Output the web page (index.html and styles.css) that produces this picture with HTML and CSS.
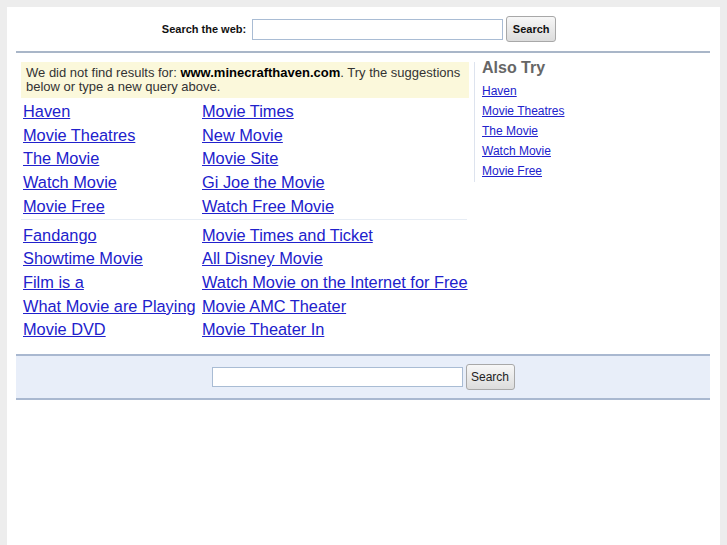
FILE: index.html
```html
<!DOCTYPE html>
<html>
<head>
<meta charset="utf-8">
<link rel="stylesheet" href="styles.css">
</head>
<body>
<div class="page">
  <div class="header">
    <label class="search-label">Search the web:</label>
    <input class="search-input" type="text">
    <button class="btn btn-bold">Search</button>
  </div>
  <div class="main">
    <div class="left">
      <div class="notice">We did not find results for: <b>www.minecrafthaven.com</b>. Try the suggestions below or type a new query above.</div>
      <div class="links">
        <a href="#">Haven</a><a href="#">Movie Times</a>
        <a href="#">Movie Theatres</a><a href="#">New Movie</a>
        <a href="#">The Movie</a><a href="#">Movie Site</a>
        <a href="#">Watch Movie</a><a href="#">Gi Joe the Movie</a>
        <a href="#">Movie Free</a><a href="#">Watch Free Movie</a>
      </div>
      <div class="sep"></div>
      <div class="links">
        <a href="#">Fandango</a><a href="#">Movie Times and Ticket</a>
        <a href="#">Showtime Movie</a><a href="#">All Disney Movie</a>
        <a href="#">Film is a</a><a href="#">Watch Movie on the Internet for Free</a>
        <a href="#">What Movie are Playing</a><a href="#">Movie AMC Theater</a>
        <a href="#">Movie DVD</a><a href="#">Movie Theater In</a>
      </div>
    </div>
    <div class="right">
      <div class="also">Also Try</div>
      <a href="#">Haven</a>
      <a href="#">Movie Theatres</a>
      <a href="#">The Movie</a>
      <a href="#">Watch Movie</a>
      <a href="#">Movie Free</a>
    </div>
  </div>
  <div class="bottom">
    <input class="search-input" type="text">
    <button class="btn">Search</button>
  </div>
</div>
</body>
</html>
```

FILE: styles.css
```css
html, body {
  margin: 0;
  padding: 0;
}
body {
  background: #ededed;
  padding: 7px 7px 0 7px;
  font-family: "Liberation Sans", Arial, sans-serif;
}
.page {
  background: #fff;
  min-height: 538px;
  padding: 0 10px 0 9px;
}
.header {
  height: 44px;
  display: flex;
  align-items: center;
  justify-content: center;
  border-bottom: 2px solid #a9b6c8;
  padding-right: 8px;
}
.search-label {
  font-size: 11px;
  font-weight: bold;
  color: #111;
  margin-right: 6px;
}
.search-input {
  box-sizing: border-box;
  width: 251px;
  height: 21px;
  border: 1px solid #a9bcd4;
  background: #fff;
  margin: 0;
  padding: 0 3px;
}
.btn {
  box-sizing: border-box;
  height: 26px;
  margin: 0 0 0 3px;
  padding: 0 5px;
  border: 1px solid #a8a8a8;
  border-radius: 3px;
  background: linear-gradient(#f7f7f7, #dcdcdc);
  font-family: "Liberation Sans", Arial, sans-serif;
  font-size: 12px;
  color: #222;
}
.btn-bold {
  font-weight: bold;
  font-size: 11px;
  color: #111;
  width: 50px;
}
.main {
  display: flex;
  padding-top: 9px;
}
.left {
  width: 448px;
  margin-left: 5px;
}
.notice {
  background: #fbf8db;
  font-size: 13px;
  line-height: 14px;
  color: #333;
  padding: 4px 5px 4px 5px;
}
.notice b {
  color: #000;
}
.links {
  display: grid;
  grid-template-columns: 179px auto;
  padding-left: 2px;
  padding-top: 2px;
}
.links a {
  font-size: 16.35px;
  line-height: 23.7px;
  color: #2121cc;
  text-decoration: underline;
  white-space: nowrap;
}
.sep {
  height: 1px;
  background: #e6ecf4;
  margin: 0 2px 2px 0;
}
.right {
  margin-left: 5px;
  border-left: 1px solid #dde3ee;
  padding-left: 7px;
  height: 120px;
  display: flex;
  flex-direction: column;
  align-items: flex-start;
}
.also {
  font-size: 16px;
  font-weight: bold;
  color: #666;
  line-height: 16px;
  margin-top: -2px;
  margin-bottom: 5px;
}
.right a {
  font-size: 12px;
  line-height: 20px;
  color: #2121cc;
  text-decoration: underline;
}
.bottom {
  margin-top: 12px;
  height: 42px;
  background: #e8eef9;
  border-top: 2px solid #a9b8d0;
  border-bottom: 2px solid #a9b8d0;
  display: flex;
  align-items: center;
  justify-content: center;
}
.bottom .search-input {
  height: 20px;
}
.bottom .btn {
  width: 49px;
  padding: 0;
}
```
